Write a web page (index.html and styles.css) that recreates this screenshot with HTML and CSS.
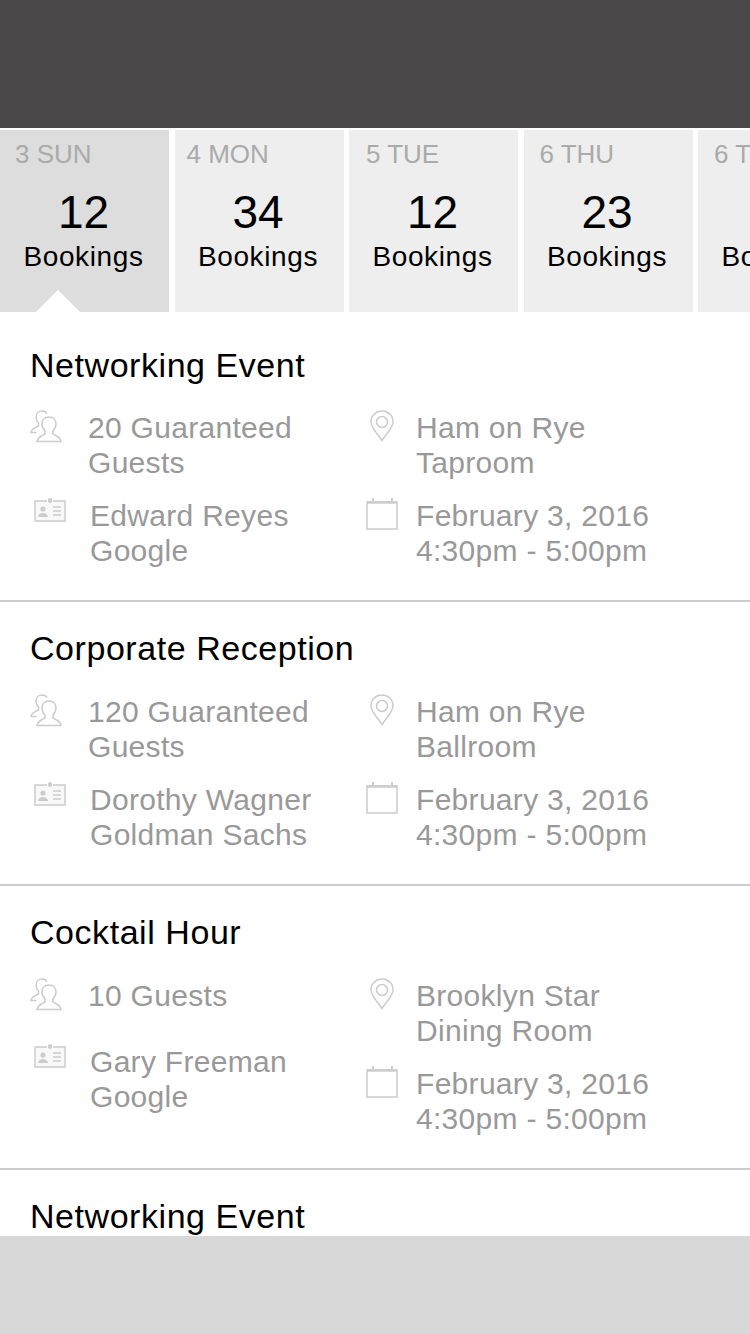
FILE: index.html
```html
<!DOCTYPE html>
<html lang="en">
<head>

    <meta charset="utf-8">

    <title>Bookings</title>

    <link rel="stylesheet" href="styles.css">

</head>
<body>

    <svg class="defs" width="0" height="0">
        <symbol id="i_guests" viewBox="0 0 32 34">
            <path d="M17 3.500C16 1.800 14 1 12 1 8.500 1 6 3.500 6 7c0 2.500 1 4.500 2.500 6v3C5 17.500 2 18.500 1 22.500h5.500" fill="none" stroke="currentColor" stroke-width="1.500"/>
            <path d="M19 7c-4.500 0-7 3-7 7 0 3 1.500 5.500 3 7v3c-4 2-7 3-8 7.500h24c-1-4.500-4-5.500-8-7.500v-3c1.500-1.500 3-4 3-7 0-4-2.500-7-7-7z" fill="none" stroke="currentColor" stroke-width="1.500"/>
        </symbol>
        <symbol id="i_card" viewBox="0 0 32 24">
            <path d="M13 3H1v20h30V3H19" fill="#f8f8f8" stroke="currentColor" stroke-width="1.500"/>
            <rect x="14" y="0" width="4" height="5" rx="2" fill="currentColor"/>
            <circle cx="9" cy="11" r="2.600" fill="currentColor"/>
            <path d="M4 19c.5-3 2.500-4 5-4s4.500 1 5 4z" fill="currentColor"/>
            <path d="M19 9h8M19 13h8M19 17h8" stroke="currentColor" stroke-width="1.500"/>
        </symbol>
        <symbol id="i_pin" viewBox="0 0 24 32">
            <path d="M12 30.500C8 24 1 18 1 12 1 5.500 6 1 12 1s11 4.500 11 11c0 6-7 12-11 18.500z" fill="none" stroke="currentColor" stroke-width="1.500"/>
            <circle cx="12" cy="12" r="5.500" fill="none" stroke="currentColor" stroke-width="1.500"/>
        </symbol>
        <symbol id="i_cal" viewBox="0 0 32 32">
            <path d="M1 4h30v27H1z" fill="none" stroke="currentColor" stroke-width="1.500"/>
            <path d="M1 4.500h30" stroke="currentColor" stroke-width="2.500"/>
            <path d="M7 0v3M26 0v3" stroke="currentColor" stroke-width="2"/>
        </symbol>
    </svg>

    <div class="top_bar"></div>

    <div class="days">
        <div class="day day_active">
            <div class="day_name">3 SUN</div>
            <div class="day_count">12</div>
            <div class="day_label">Bookings</div>
        </div>
        <div class="day">
            <div class="day_name">4 MON</div>
            <div class="day_count">34</div>
            <div class="day_label">Bookings</div>
        </div>
        <div class="day">
            <div class="day_name">5 TUE</div>
            <div class="day_count">12</div>
            <div class="day_label">Bookings</div>
        </div>
        <div class="day">
            <div class="day_name">6 THU</div>
            <div class="day_count">23</div>
            <div class="day_label">Bookings</div>
        </div>
        <div class="day">
            <div class="day_name">6 THU</div>
            <div class="day_count">23</div>
            <div class="day_label">Bookings</div>
        </div>
    </div>

    <div class="events">

        <div class="event event_first">
            <div class="event_title">Networking Event</div>
            <div class="event_info">
                <div class="info_col">
                    <div class="info_row">
                        <svg class="icon icon_guests"><use href="#i_guests"/></svg>
                        <div>20 Guaranteed<br>Guests</div>
                    </div>
                    <div class="info_row">
                        <svg class="icon icon_card"><use href="#i_card"/></svg>
                        <div>Edward Reyes<br>Google</div>
                    </div>
                </div>
                <div class="info_col">
                    <div class="info_row">
                        <svg class="icon icon_pin"><use href="#i_pin"/></svg>
                        <div>Ham on Rye<br>Taproom</div>
                    </div>
                    <div class="info_row">
                        <svg class="icon icon_cal"><use href="#i_cal"/></svg>
                        <div>February 3, 2016<br>4:30pm - 5:00pm</div>
                    </div>
                </div>
            </div>
        </div>

        <div class="event">
            <div class="event_title">Corporate Reception</div>
            <div class="event_info">
                <div class="info_col">
                    <div class="info_row">
                        <svg class="icon icon_guests"><use href="#i_guests"/></svg>
                        <div>120 Guaranteed<br>Guests</div>
                    </div>
                    <div class="info_row">
                        <svg class="icon icon_card"><use href="#i_card"/></svg>
                        <div>Dorothy Wagner<br>Goldman Sachs</div>
                    </div>
                </div>
                <div class="info_col">
                    <div class="info_row">
                        <svg class="icon icon_pin"><use href="#i_pin"/></svg>
                        <div>Ham on Rye<br>Ballroom</div>
                    </div>
                    <div class="info_row">
                        <svg class="icon icon_cal"><use href="#i_cal"/></svg>
                        <div>February 3, 2016<br>4:30pm - 5:00pm</div>
                    </div>
                </div>
            </div>
        </div>

        <div class="event">
            <div class="event_title">Cocktail Hour</div>
            <div class="event_info">
                <div class="info_col info_col_short">
                    <div class="info_row">
                        <svg class="icon icon_guests"><use href="#i_guests"/></svg>
                        <div>10 Guests</div>
                    </div>
                    <div class="info_row">
                        <svg class="icon icon_card"><use href="#i_card"/></svg>
                        <div>Gary Freeman<br>Google</div>
                    </div>
                </div>
                <div class="info_col">
                    <div class="info_row">
                        <svg class="icon icon_pin"><use href="#i_pin"/></svg>
                        <div>Brooklyn Star<br>Dining Room</div>
                    </div>
                    <div class="info_row">
                        <svg class="icon icon_cal"><use href="#i_cal"/></svg>
                        <div>February 3, 2016<br>4:30pm - 5:00pm</div>
                    </div>
                </div>
            </div>
        </div>

        <div class="event">
            <div class="event_title">Networking Event</div>
        </div>

    </div>

    <div class="bottom_bar"></div>

</body>
</html>
```

FILE: styles.css
```css
html, body {
    width: 750px;
    height: 1334px;
    margin: 0;
    overflow: hidden;
    background: #fff;
    font-family: "Liberation Sans", Arial, sans-serif;
}
.defs {
    position: absolute;
}
.top_bar {
    height: 128px;
    background: #4a4849;
}
/* day tabs */
.days {
    display: flex;
    gap: 5.5px;
    height: 182px;
    margin-top: 2px;
    overflow: hidden;
}
.day {
    position: relative;
    flex: 0 0 169px;
    padding-right: 2px;
    box-sizing: border-box;
    background: #eee;
    text-align: center;
    color: #000;
}
.day_active {
    background: #ddd;
}
.day_active::after {
    content: "";
    position: absolute;
    left: 36px;
    bottom: 0;
    border-left: 22px solid transparent;
    border-right: 22px solid transparent;
    border-bottom: 22px solid #fff;
}
.day_name {
    height: 26px;
    padding: 9px 0 0 16px;
    text-align: left;
    font-size: 26px;
    line-height: 30px;
    color: #aaa;
}
.day:nth-child(1) .day_name {
    padding-left: 15px;
}
.day:nth-child(2) .day_name {
    padding-left: 12px;
}
.day:nth-child(3) .day_name {
    padding-left: 17px;
}
.day_count {
    margin-top: 21px;
    font-size: 46px;
    line-height: 52px;
}
.day_label {
    margin-top: 2px;
    font-size: 28px;
    line-height: 34px;
    letter-spacing: 0.6px;
}
/* event list */
.events {
    height: 924px;
    overflow: hidden;
}
.event {
    height: 282px;
    padding-left: 30px;
    border-bottom: 2px solid #ccc;
}
.event_first {
    height: 288px;
}
.event_title {
    padding-top: 26px;
    font-size: 34px;
    line-height: 40px;
    letter-spacing: 0.55px;
    color: #000;
}
.event_first .event_title {
    padding-top: 33px;
}
.event_info {
    display: flex;
    margin-top: 26px;
    font-size: 30px;
    line-height: 35px;
    letter-spacing: 0.3px;
    color: #999;
}
.event_first .event_info {
    margin-top: 25px;
}
.info_col {
    display: flex;
    flex-direction: column;
    gap: 18px;
    width: 336px;
}
.info_col_short {
    gap: 31px;
}
.info_row {
    display: flex;
}
.icon {
    flex: none;
    color: #ccc;
}
.icon_guests {
    width: 32px;
    height: 34px;
    margin-right: 26px;
}
.icon_card {
    width: 32px;
    height: 24px;
    margin: 0 24px 0 4px;
}
.icon_pin {
    width: 24px;
    height: 32px;
    margin: 0 22px 0 4px;
}
.icon_cal {
    width: 32px;
    height: 32px;
    margin-right: 18px;
}
.bottom_bar {
    height: 98px;
    background: #d8d8d8;
}
```
